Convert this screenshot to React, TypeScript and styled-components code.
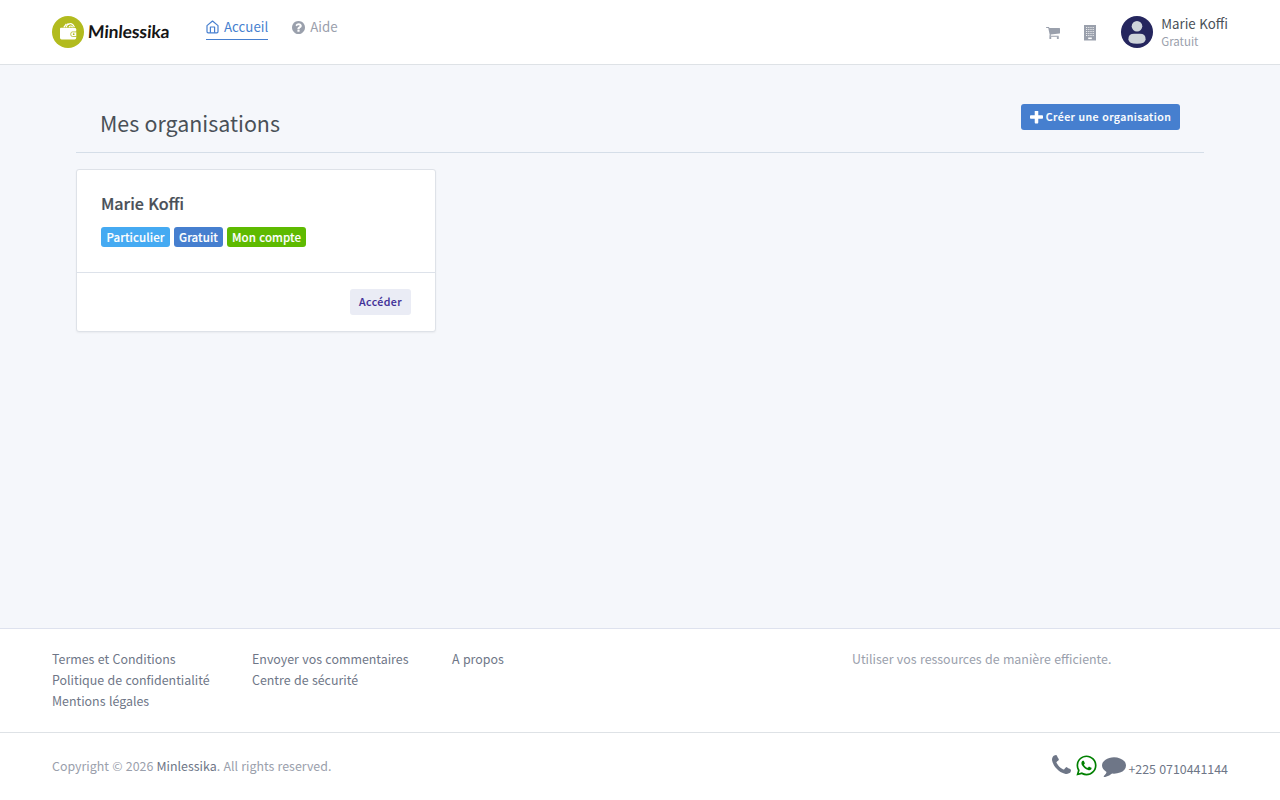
import React from 'react';
import styled, { createGlobalStyle } from 'styled-components';
import { FaWhatsapp } from 'react-icons/fa';

const Global = createGlobalStyle`
  *, *::before, *::after { box-sizing: border-box; }
  body {
    margin: 0;
    background: #f5f7fb;
    color: #495057;
    font-family: "Noto Sans CJK SC", "Open Sans", sans-serif;
    font-size: 13.3px;
    line-height: 1.5;
    word-spacing: 0.6px;
    -webkit-font-smoothing: antialiased;
  }
  a { color: inherit; text-decoration: none; }
`;

const Page = styled.div`
  display: flex;
  flex-direction: column;
  height: 800px;
`;

const TopBar = styled.header`
  display: flex;
  height: 65px;
  padding: 0 52px;
  background: #fff;
  border-bottom: 1px solid #dee2e6;
`;

const Brand = styled.a`
  display: flex;
  align-items: center;
  gap: 4px;
  width: 122px;
  margin-right: 32px;
`;

const BrandName = styled.span`
  color: #151515;
  font: 700 17.5px/32px Lato, sans-serif;
  letter-spacing: -0.1px;
  white-space: nowrap;
  transform: skewX(-4deg);
`;

const Nav = styled.nav`
  display: flex;
  align-items: flex-start;
  gap: 24px;
  padding-top: 14px;
`;

const NavLink = styled.a<{ $active?: boolean }>`
  display: flex;
  align-items: center;
  gap: 5px;
  height: 26px;
  border-bottom: 1px solid ${p => (p.$active ? '#467fcf' : 'transparent')};
  color: ${p => (p.$active ? '#467fcf' : '#9aa0ac')};
  svg { margin-top: 1px; }
`;

const Tools = styled.div`
  display: flex;
  align-items: center;
  margin-left: auto;
  color: #9aa0ac;
`;

const ToolLink = styled.a<{ $gap: number }>`
  display: flex;
  margin-right: ${p => p.$gap}px;
  padding-top: 2px;
`;

const Profile = styled.a`
  display: flex;
  align-items: center;
  gap: 8px;
`;

const ProfileText = styled.div`
  display: flex;
  flex-direction: column;
`;

const ProfileName = styled.span`
  color: #495057;
  line-height: 18px;
`;

const ProfilePlan = styled.span`
  font-size: 11.5px;
  line-height: 17px;
`;

const Main = styled.main`
  flex: 1;
  padding: 0 76px;
`;

const PageHeader = styled.div`
  display: flex;
  justify-content: space-between;
  height: 88px;
  padding: 39px 24px 0;
  border-bottom: 1px solid #d5dee8;
`;

const Title = styled.h1`
  margin: 3px 0 0;
  font-size: 21.4px;
  font-weight: 400;
  line-height: 32px;
  word-spacing: 0.5px;
`;

const Button = styled.button<{ $primary?: boolean }>`
  display: flex;
  align-items: center;
  justify-content: center;
  gap: 3px;
  width: ${p => (p.$primary ? 159 : 61)}px;
  height: 26px;
  padding: 0;
  border: 0;
  border-radius: 3px;
  background: ${p => (p.$primary ? '#467fcf' : '#eaecf5')};
  color: ${p => (p.$primary ? '#fff' : '#3f2f98')};
  font: 500 10.6px/18px "Noto Sans CJK SC", sans-serif;
  letter-spacing: 0.43px;
  word-spacing: 0.4px;
  -webkit-text-stroke: 0.15px currentColor;
`;

const Card = styled.section`
  width: 360px;
  height: 163px;
  margin-top: 16px;
  border: 1px solid #dee2e8;
  border-radius: 3px;
  background: #fff;
  box-shadow: 0 1px 2px rgba(0, 0, 0, 0.05);
`;

const CardBody = styled.div`
  height: 103px;
  padding: 21px 24px 0;
  border-bottom: 1px solid #dde2ea;
`;

const CardTitle = styled.h2`
  margin: 0 0 12px;
  font-size: 16.1px;
  font-weight: 500;
  line-height: 24px;
  -webkit-text-stroke: 0.2px currentColor;
`;

const Tags = styled.div`
  display: flex;
  gap: 4px;
`;

const Tag = styled.span<{ $color: string; $width: number }>`
  width: ${p => p.$width}px;
  height: 20px;
  border-radius: 3px;
  background: ${p => p.$color};
  color: #fff;
  font-size: 11.5px;
  font-weight: 500;
  letter-spacing: 0.08px;
  line-height: 21px;
  text-align: center;
  -webkit-text-stroke: 0.12px currentColor;
`;

const CardFooter = styled.div`
  display: flex;
  justify-content: flex-end;
  padding: 16px 24px;
`;

const FooterLinks = styled.div`
  display: grid;
  grid-template-columns: 200px 200px 400px 1fr;
  height: 104px;
  padding: 20px 52px 0;
  border-top: 1px solid #dee2ee;
  background: #fff;
  color: #6e7687;
  font-size: 12.42px;
  line-height: 21px;
`;

const LinkColumn = styled.div`
  display: flex;
  flex-direction: column;
`;

const Tagline = styled.div`
  color: #9aa0ac;
`;

const Bottom = styled.footer`
  display: flex;
  justify-content: space-between;
  height: 68px;
  padding: 0 52px;
  border-top: 1px solid #dee2e6;
  background: #fff;
  color: #9aa0ac;
  font-size: 12.4px;
  line-height: 21px;
  word-spacing: 0.5px;
`;

const Copyright = styled.div`
  padding-top: 23px;
  a { color: #6e7687; }
`;

const Contact = styled.div`
  display: flex;
  align-items: flex-start;
  padding-top: 21px;
  color: #6e7687;
`;

const ContactIcon = styled.a<{ $gap: number; $color?: string; $top?: number }>`
  display: flex;
  margin-right: ${p => p.$gap}px;
  padding-top: ${p => p.$top || 0}px;
  color: ${p => p.$color || 'inherit'};
`;

const Phone = styled.span`
  padding-top: 5px;
`;

const Glyph = ({ d, w, h, box = '0 0 1792 1792' }: { d: string; w: number; h: number; box?: string }) => (
  <svg width={w} height={h} viewBox={box} fill="currentColor" preserveAspectRatio="none"><path d={d} /></svg>
);

const questionPath = 'M1024 1376v-192q0-14-9-23t-23-9h-192q-14 0-23 9t-9 23v192q0 14 9 23t23 9h192q14 0 23-9t9-23zm256-672q0-88-55.5-163t-138.5-116-170-41q-243 0-371 213-15 24 8 42l132 100q7 6 19 6 16 0 25-12 53-68 86-92 34-24 86-24 48 0 85.5 26t37.5 59q0 38-20 61t-68 45q-63 28-115.5 86.5t-52.5 125.5v36q0 14 9 23t23 9h192q14 0 23-9t9-23q0-19 21.5-49.5t54.5-49.5q32-18 49-28.5t46-35 44.5-48 28-60.5 12.5-81zm384 192q0 209-103 385.5t-279.5 279.5-385.5 103-385.5-103-279.5-279.5-103-385.5 103-385.5 279.5-279.5 385.5-103 385.5 103 279.5 279.5 103 385.5z';
const cartPath = 'M704 1536q0 52-38 90t-90 38-90-38-38-90 38-90 90-38 90 38 38 90zm896 0q0 52-38 90t-90 38-90-38-38-90 38-90 90-38 90 38 38 90zm128-1088v512q0 24-16.5 42.5t-40.5 21.5l-1044 122q13 60 13 70 0 16-24 64h920q26 0 45 19t19 45-19 45-45 19h-1024q-26 0-45-19t-19-45q0-11 8-31.5t16-36 21.5-40 15.5-29.5l-177-823h-204q-26 0-45-19t-19-45 19-45 45-19h256q16 0 28.5 6.5t19.5 15.5 13 24.5 8 26 5.5 29.5 4.5 26h1201q26 0 45 19t19 45z';
const plusPath = 'M1600 736v192q0 40-28 68t-68 28h-416v416q0 40-28 68t-68 28h-192q-40 0-68-28t-28-68v-416h-416q-40 0-68-28t-28-68v-192q0-40 28-68t68-28h416v-416q0-40 28-68t68-28h192q40 0 68 28t28 68v416h416q40 0 68 28t28 68z';
const commentPath = 'M1792 896q0 174-120 321.5t-326 233-450 85.5q-70 0-145-8-198 175-460 242-49 14-114 22-17 2-30.5-9t-17.5-29v-1q-3-4-.5-12t2-10 4.5-9.5l6-9 7-8.5 8-9q7-8 31-34.5t34.5-38 31-39.5 32.5-51 27-59 26-76q-157-89-247.5-220t-90.5-281q0-130 71-248.5t191-204.5 286-136.5 348-50.5q244 0 450 85.5t326 233 120 321.5z';
const phonePath = 'M1600 1240q0 27-10 70.5t-21 68.5q-21 50-122 106-94 51-186 51-27 0-53-3.5t-57.5-12.5-47-14.5-55.5-20.5-49-18q-98-35-175-83-127-79-264-216t-216-264q-48-77-83-175-3-9-18-49t-20.5-55.5-14.5-47-12.5-57.5-3.5-53q0-92 51-186 56-101 106-122 25-11 68.5-21t70.5-10q14 0 21 3 18 6 53 76 11 19 30 54t35 63.5 31 53.5q3 4 17.5 25t21.5 35.5 7 28.5q0 20-28.5 50t-62 55-62 53-28.5 46q0 9 5 22.5t8.5 20.5 14 24 11.5 19q76 137 174 235t235 174q2 1 19 11.5t24 14 20.5 8.5 22.5 5q18 0 46-28.5t53-62 55-62 50-28.5q14 0 28.5 7t35.5 21.5 25 17.5q25 15 53.5 31t63.5 35 54 30q70 35 76 53 3 7 3 21z';

const Logo = () => (
  <svg width="32" height="32" viewBox="0 0 32 32">
    <circle cx="16" cy="16" r="16" fill="#b2bb1e" />
    <path d="M8 12.6q0-.9 1-.9h13.6q1.6 0 1.6 1.5v8.6q0 1.6-1.6 1.6H9.6Q8 23.4 8 21.8z" fill="#fff" />
    <path d="M20.3 15.9h4.4v4.6h-4.4q-1.6 0-1.6-2.3t1.6-2.3z" fill="#fff" stroke="#b2bb1e" strokeWidth=".8" />
    <circle cx="21.7" cy="18.2" r=".9" fill="#b2bb1e" />
    <path d="M11.8 11.3l2.6-3.4M14 11.3l2.3-4M16.2 8.4q3.8-2.4 6.2 2.6M17 11.2q1.8-2.4 3.6 0" fill="none" stroke="#fff" strokeWidth="1.2" />
  </svg>
);

const HomeIcon = () => (
  <svg width="13" height="14" viewBox="0 0 13 14" fill="none" stroke="currentColor" strokeWidth="1.2" strokeLinejoin="round">
    <path d="M1 5.6L6.5 1 12 5.6v6q0 1.3-1.2 1.3H2.2Q1 12.9 1 11.6z" />
    <path d="M4.4 12.8V7h4.2v5.8" />
  </svg>
);

const BuildingIcon = () => (
  <svg width="12" height="16" viewBox="0 0 12 16">
    <path d="M0 0h12v15.5H0z" fill="#9aa0ac" />
    <path d="M2 2.5h8M2 4.5h8M2 6.5h8M2 8.5h8M2 10.5h8" stroke="#fff" strokeWidth=".8" strokeDasharray="1.2 1" />
    <path d="M4.2 12.5h3.6v1.6H4.2z" fill="#fff" />
  </svg>
);

const Avatar = () => (
  <svg width="32" height="32" viewBox="0 0 32 32">
    <circle cx="16" cy="16" r="16" fill="#25265e" />
    <circle cx="16" cy="10.2" r="5.3" fill="#ced4da" />
    <path d="M13 17.8h6q5.6 0 5.6 5.4 0 4.6-8.6 4.6t-8.6-4.6q0-5.4 5.6-5.4z" fill="#ced4da" />
  </svg>
);

export default function App() {
  return (
    <Page>
      <Global />
      <TopBar>
        <Brand href="#"><Logo /><BrandName>Minlessika</BrandName></Brand>
        <Nav>
          <NavLink href="#" $active><HomeIcon />Accueil</NavLink>
          <NavLink href="#"><Glyph d={questionPath} w={13} h={13} box="128 128 1536 1536" />Aide</NavLink>
        </Nav>
        <Tools>
          <ToolLink href="#" $gap={24}><Glyph d={cartPath} w={14} h={12} box="64 256 1664 1408" /></ToolLink>
          <ToolLink href="#" $gap={25}><BuildingIcon /></ToolLink>
          <Profile href="#">
            <Avatar />
            <ProfileText>
              <ProfileName>Marie Koffi</ProfileName>
              <ProfilePlan>Gratuit</ProfilePlan>
            </ProfileText>
          </Profile>
        </Tools>
      </TopBar>
      <Main>
        <PageHeader>
          <Title>Mes organisations</Title>
          <Button $primary><Glyph d={plusPath} w={13} h={13} box="192 192 1408 1408" />Créer une organisation</Button>
        </PageHeader>
        <Card>
          <CardBody>
            <CardTitle>Marie Koffi</CardTitle>
            <Tags>
              <Tag $color="#45aaf2" $width={69}>Particulier</Tag>
              <Tag $color="#467fcf" $width={49}>Gratuit</Tag>
              <Tag $color="#5eba00" $width={79}>Mon compte</Tag>
            </Tags>
          </CardBody>
          <CardFooter><Button>Accéder</Button></CardFooter>
        </Card>
      </Main>
      <FooterLinks>
        <LinkColumn>
          <a href="#">Termes et Conditions</a>
          <a href="#">Politique de confidentialité</a>
          <a href="#">Mentions légales</a>
        </LinkColumn>
        <LinkColumn>
          <a href="#">Envoyer vos commentaires</a>
          <a href="#">Centre de sécurité</a>
        </LinkColumn>
        <LinkColumn><a href="#">A propos</a></LinkColumn>
        <Tagline>Utiliser vos ressources de manière efficiente.</Tagline>
      </FooterLinks>
      <Bottom>
        <Copyright>Copyright © 2026 <a href="#">Minlessika</a>. All rights reserved.</Copyright>
        <Contact>
          <ContactIcon href="#" $gap={4} $top={1}><Glyph d={phonePath} w={19} h={19} box="192 128 1408 1408" /></ContactIcon>
          <ContactIcon href="#" $gap={4} $color="#008000"><FaWhatsapp size={23} /></ContactIcon>
          <ContactIcon href="#" $gap={2.6}><Glyph d={commentPath} w={24} h={23} /></ContactIcon>
          <Phone>+225 0710441144</Phone>
        </Contact>
      </Bottom>
    </Page>
  );
}
